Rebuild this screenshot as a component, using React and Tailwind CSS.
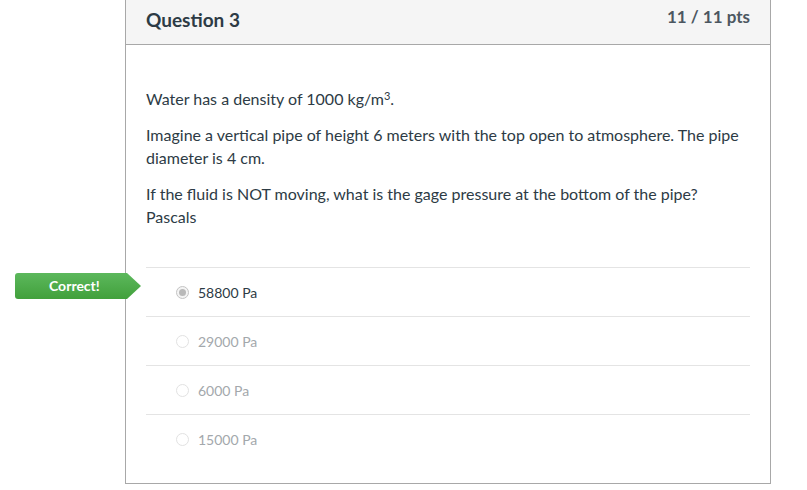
import React from 'react';

const answers = [
    { text: '58800 Pa', selected: true },
    { text: '29000 Pa', selected: false },
    { text: '6000 Pa', selected: false },
    { text: '15000 Pa', selected: false },
];

const Radio = ({ selected }) => (
    <span
        className={`w-[13px] h-[13px] rounded-full border flex items-center justify-center ${selected ? 'border-[#c4c4c4] bg-[#f4f4f4]' : 'border-[#e2e2e2] bg-white'}`}
    >
        {selected && <span className="w-[7px] h-[7px] rounded-full bg-[#b9b9b9]"></span>}
    </span>
);

const App = () => {
    return (
        <div className="w-[807px] h-[490px] bg-white overflow-hidden font-['Lato','Open_Sans',sans-serif] text-[#2d3b45]">
            <div className="ml-[125px] w-[646px] border-x border-b border-[#a8a8a8]">
                {/* Header */}
                <div className="h-[45px] bg-[#f5f5f5] border-b border-[#a8a8a8] px-5 flex items-start justify-between">
                    <h2 className="text-[19px] font-bold leading-none pt-[10px]">Question 3</h2>
                    <span className="text-[17px] font-bold text-[#4c5761] leading-none pt-[8px]">11 / 11 pts</span>
                </div>

                {/* Question text */}
                <div className="px-5 pt-[42px] text-[16px] leading-[23px]">
                    <p className="mb-[13px]">
                        Water has a density of 1000 kg/m<sup className="text-[11px] leading-none">3</sup>.
                    </p>
                    <p className="mb-[13px]">Imagine a vertical pipe of height 6 meters with the top open to atmosphere. The pipe diameter is 4 cm.</p>
                    <p>
                        If the fluid is NOT moving, what is the gage pressure at the bottom of the pipe?
                        <br />
                        Pascals
                    </p>
                </div>

                {/* Answers */}
                <div className="px-5 pt-[39px] pb-[20px]">
                    {answers.map((a, i) => (
                        <div key={i} className="relative h-[49px] border-t border-[#e4e4e4] flex items-center pl-[30px] gap-[9px]">
                            <Radio selected={a.selected} />
                            <span className={`text-[14px] ${a.selected ? 'text-[#2d3b45]' : 'text-[#a3a8ac]'}`}>{a.text}</span>
                            {a.selected && (
                                <div className="absolute left-[-131px] top-[5px] w-[126px] h-[26px] bg-gradient-to-b from-[#5cb85c] to-[#41a03b] [clip-path:polygon(0_0,112px_0,126px_13px,112px_26px,0_26px)] rounded-l-[3px] flex items-center pl-[34px]">
                                    <span className="text-white font-bold text-[14px] leading-none">Correct!</span>
                                </div>
                            )}
                        </div>
                    ))}
                </div>
            </div>
        </div>
    );
};

export default App;
